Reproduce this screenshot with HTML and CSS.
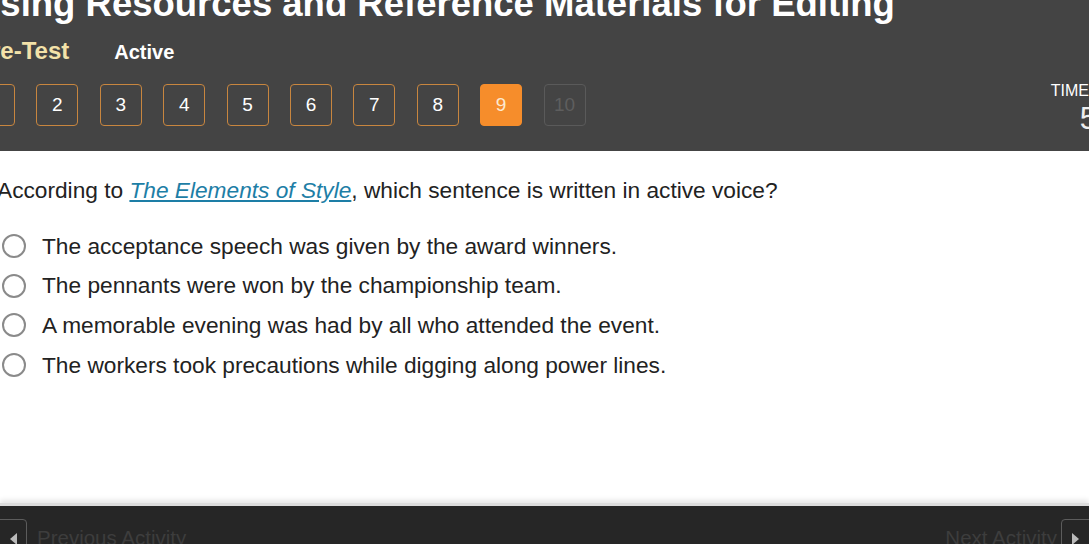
FILE: index.html
```html
<!DOCTYPE html>
<html lang="en">
<head>
    <meta charset="UTF-8">
    <title>Using Resources and Reference Materials for Editing</title>
    <link rel="stylesheet" href="styles.css">
</head>
<body>

    <!-- En-tete de l'activite -->
    <div id="header">
        <h1 class="title">Using Resources and Reference Materials for Editing</h1>
        <div class="status-row">
            <span class="test-name">Pre-Test</span>
            <span class="test-state">Active</span>
        </div>
        <div class="nav-row">
            <div class="pager">
                <div class="page done">1</div>
                <div class="page done">2</div>
                <div class="page done">3</div>
                <div class="page done">4</div>
                <div class="page done">5</div>
                <div class="page done">6</div>
                <div class="page done">7</div>
                <div class="page done">8</div>
                <div class="page current">9</div>
                <div class="page locked">10</div>
            </div>
            <div class="timer">
                <div class="timer-label">TIME</div>
                <div class="timer-value">5</div>
            </div>
        </div>
    </div>

    <!-- Question -->
    <div id="question">
        <p class="prompt">According to <a href="#" class="ref">The Elements of Style</a>, which sentence is written in active voice?</p>
        <ul class="answers">
            <li class="answer"><span class="radio"></span>The acceptance speech was given by the award winners.</li>
            <li class="answer"><span class="radio"></span>The pennants were won by the championship team.</li>
            <li class="answer"><span class="radio"></span>A memorable evening was had by all who attended the event.</li>
            <li class="answer"><span class="radio"></span>The workers took precautions while digging along power lines.</li>
        </ul>
    </div>

    <!-- Pied de page -->
    <div id="footer">
        <div class="foot-nav">
            <button class="arrow-btn prev"><span class="tri-left"></span></button>
            <span class="foot-label">Previous Activity</span>
        </div>
        <div class="foot-nav">
            <span class="foot-label">Next Activity</span>
            <button class="arrow-btn next"><span class="tri-right"></span></button>
        </div>
    </div>

</body>
</html>
```

FILE: styles.css
```css
body {
    font-family: "Liberation Sans", Arial, sans-serif;
    background-color: #fff;
    margin: 0;
    overflow: hidden;
    width: 1089px;
    height: 544px;
    display: flex;
    flex-direction: column;
}

#header {
    background-color: #444;
    height: 151px;
    overflow: hidden;
    flex-shrink: 0;
}

.title {
    font-size: 36.5px;
    font-weight: bold;
    color: #fff;
    margin: -16px 0 0 -26px;
    line-height: 40px;
    white-space: nowrap;
}

.status-row {
    display: flex;
    align-items: baseline;
    margin: 13px 0 0 -25px;
    height: 28px;
}

.test-name {
    font-size: 24px;
    font-weight: bold;
    color: #f3e2a9;
}

.test-state {
    font-size: 20px;
    font-weight: bold;
    color: #fff;
    margin-left: 45px;
}

.nav-row {
    display: flex;
    justify-content: space-between;
    margin-top: 19px;
}

.pager {
    display: flex;
    gap: 21.4px;
    margin-left: -27px;
}

.page {
    width: 42px;
    height: 42px;
    box-sizing: border-box;
    border: 1.5px solid #c8863f;
    border-radius: 4px;
    color: #fff;
    font-size: 19px;
    display: flex;
    align-items: center;
    justify-content: center;
}

.page.current {
    background-color: #f68d2b;
    border-color: #f68d2b;
    color: #fde9cf;
}

.page.locked {
    border-color: #5a5a5a;
    color: #5e5e5e;
}

.timer {
    text-align: right;
    color: #fff;
    margin-right: -8px;
    margin-top: -2px;
}

.timer-label {
    font-size: 16px;
    margin-right: 8px;
}

.timer-value {
    font-size: 31px;
    font-weight: 300;
    line-height: 30px;
    margin-top: 4px;
    color: #eee;
}

#question {
    flex: 1;
    padding-top: 26px;
    color: #222;
}

.prompt {
    font-size: 22.7px;
    margin: 0 0 0 -3px;
}

.ref {
    color: #1d7ea6;
    font-style: italic;
}

.answers {
    list-style: none;
    padding: 0;
    margin: 27px 0 0 0;
}

.answer {
    font-size: 22.7px;
    height: 40px;
    display: flex;
    align-items: center;
    margin-top: -5px;
}

.answer + .answer {
    margin-top: -0.3px;
}

.radio {
    width: 20px;
    height: 20px;
    border: 2px solid #8a8a8a;
    border-radius: 50%;
    margin: 0 16px 0 2px;
    flex-shrink: 0;
}

#footer {
    flex-shrink: 0;
    background-color: #262626;
    border-top: 3px solid #dcdcdc;
    box-shadow: 0 -3px 5px rgba(0, 0, 0, 0.1);
    display: flex;
    justify-content: space-between;
    align-items: flex-start;
    padding-top: 13px;
    box-sizing: border-box;
    height: 41px;
}

.foot-nav {
    display: flex;
    align-items: flex-start;
}

.foot-label {
    font-size: 20.5px;
    color: #3d3d3d;
    margin-top: 7px;
}

.arrow-btn {
    width: 40px;
    height: 40px;
    background-color: #262626;
    border: 1px solid #5c5c5c;
    border-radius: 4px;
    padding: 0;
    display: flex;
    align-items: center;
    justify-content: center;
}

.arrow-btn.prev {
    margin-left: -13px;
    margin-right: 10px;
}

.arrow-btn.next {
    margin-left: 4px;
    margin-right: -12px;
}

.tri-left {
    width: 0;
    height: 0;
    border-top: 6px solid transparent;
    border-bottom: 6px solid transparent;
    border-right: 7px solid #bbb;
    margin-left: 12px;
}

.tri-right {
    width: 0;
    height: 0;
    border-top: 6px solid transparent;
    border-bottom: 6px solid transparent;
    border-left: 7px solid #bbb;
    margin-right: 12px;
}
```
